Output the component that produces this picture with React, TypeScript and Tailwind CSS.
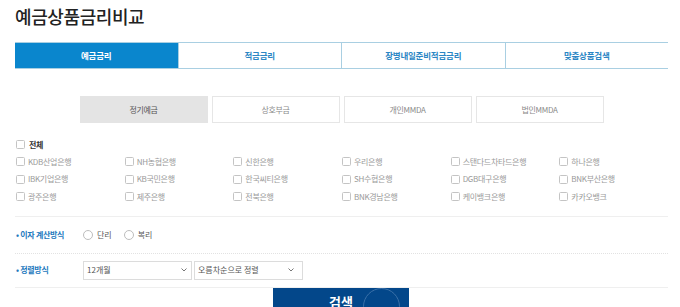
import React from 'react';

const tabs = ['예금금리', '적금금리', '장병내일준비적금금리', '맞춤상품검색'];
const subTabs = ['정기예금', '상호부금', '개인MMDA', '법인MMDA'];
const banks = [
  'KDB산업은행', 'NH농협은행', '신한은행', '우리은행', '스탠다드차타드은행', '하나은행',
  'IBK기업은행', 'KB국민은행', '한국씨티은행', 'SH수협은행', 'DGB대구은행', 'BNK부산은행',
  '광주은행', '제주은행', '전북은행', 'BNK경남은행', '케이뱅크은행', '카카오뱅크',
];

const Box = () => (
  <span className="inline-block w-[9px] h-[9px] border border-[#c4c4c4] rounded-[1.5px] bg-white shrink-0" />
);

const Radio = () => (
  <span className="inline-block w-[10px] h-[10px] border border-[#bdbdbd] rounded-full bg-white shrink-0" />
);

const Chevron = () => (
  <svg width="6" height="4" viewBox="0 0 6 4" className="shrink-0">
    <path d="M0.5 0.5 L3 3 L5.5 0.5" fill="none" stroke="#777" strokeWidth="1" />
  </svg>
);

export default function App() {
  return (
    <div
      className="w-[680px] h-[307px] overflow-hidden bg-white"
      style={{ fontFamily: '"Noto Sans CJK KR", "Noto Sans", sans-serif' }}
    >
      <h1 className="pl-[15px] pt-[5px] h-[27px] leading-[22px] text-[18px] font-medium tracking-[-0.4px] text-[#222]">
        예금상품금리비교
      </h1>

      <div className="ml-[15px] w-[653px] mt-[15px] h-[27px] flex border-y border-[#a9cfe2]">
        {tabs.map((t, i) => (
          <div
            key={t}
            className={`flex-1 flex items-center justify-center text-[8.5px] font-semibold tracking-[-0.2px] ${
              i === 0
                ? 'bg-[#0a86cd] text-white'
                : 'text-[#2b86c4] border-l border-[#a9cfe2]'
            }`}
          >
            {t}
          </div>
        ))}
      </div>

      <div className="ml-[15px] w-[653px] mt-[27px] flex justify-center gap-[4px]">
        {subTabs.map((t, i) => (
          <div
            key={t}
            className={`w-[128px] h-[27px] flex items-center justify-center text-[8px] tracking-[-0.3px] ${
              i === 0
                ? 'bg-[#e4e4e4] text-[#555]'
                : 'border border-[#e6e6e6] text-[#8a8a8a]'
            }`}
          >
            {t}
          </div>
        ))}
      </div>

      <div className="mt-[13px] ml-[16px]">
        <div className="flex items-center gap-[4px] h-[17px]">
          <Box />
          <span className="text-[8px] font-bold text-[#333] tracking-[-0.3px]">전체</span>
        </div>
        <div className="grid grid-cols-6 w-[652px]">
          {banks.map(b => (
            <div key={b} className="flex items-center gap-[3px] h-[17.5px]">
              <Box />
              <span className="text-[8px] text-[#9a9a9a] tracking-[-0.3px]">{b}</span>
            </div>
          ))}
        </div>
      </div>

      <div className="ml-[15px] w-[653px] mt-[10px] border-t border-[#efefef]">
        <div className="flex items-center h-[36px]">
          <div className="w-[68px] pl-px text-[8px] font-bold text-[#2278bd] tracking-[-0.3px]">
            • 이자 계산방식
          </div>
          <div className="flex items-center gap-[4px]">
            <Radio />
            <span className="text-[8px] text-[#555]">단리</span>
          </div>
          <div className="flex items-center gap-[4px] ml-[12px]">
            <Radio />
            <span className="text-[8px] text-[#555]">복리</span>
          </div>
        </div>
        <div className="border-t border-dotted border-[#e2e2e2] flex items-center h-[34px]">
          <div className="w-[68px] pl-px text-[8px] font-bold text-[#2278bd] tracking-[-0.3px]">
            • 정렬방식
          </div>
          <div className="w-[109px] h-[19px] border border-[#dcdcdc] flex items-center justify-between pl-[3px] pr-[4px]">
            <span className="text-[8px] text-[#555]">12개월</span>
            <Chevron />
          </div>
          <div className="ml-[2px] w-[109px] h-[19px] border border-[#dcdcdc] flex items-center justify-between pl-[3px] pr-[8px]">
            <span className="text-[8px] text-[#555]">오름차순으로 정렬</span>
            <Chevron />
          </div>
        </div>
        <div className="border-t border-[#efefef] flex justify-start pl-[258px]">
          <div className="relative w-[136px] h-[36px] bg-[#03478a] flex justify-center pt-[6px] overflow-hidden">
            <span className="text-[13px] font-bold text-white leading-[16px]">검색</span>
            <span className="absolute left-[90px] top-[0px] w-[37px] h-[37px] rounded-full border-[1.5px] border-[#3a70a8]" />
          </div>
        </div>
      </div>
    </div>
  );
}
